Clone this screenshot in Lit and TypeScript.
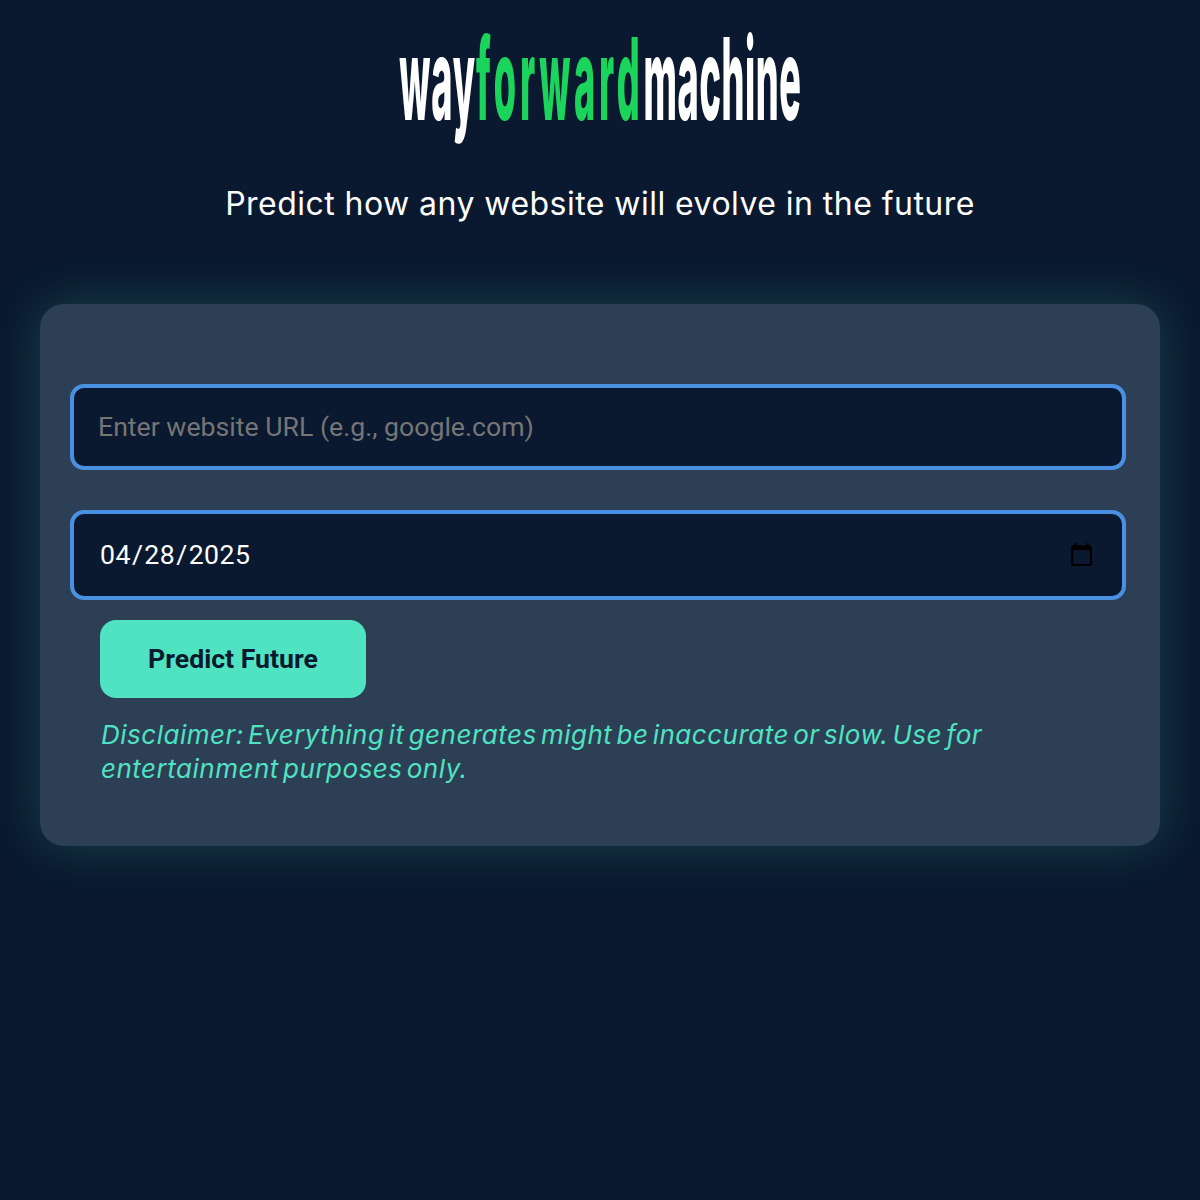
import { LitElement, html, css } from "lit";
import { customElement } from "lit/decorators.js";

@customElement("app-root")
export class AppRoot extends LitElement {
  static styles = css`
    :host { display: block; min-height: 1200px; background: #0a192f; font-family: "Roboto", sans-serif; color: #fff; }
    .page { display: flex; flex-direction: column; padding: 0 40px; }
    .logo-wrap { height: 148px; display: flex; justify-content: center; align-items: flex-start; overflow: visible; }
    .logo { flex: none; display: inline-block; font: 800 114px/157px "Inter", sans-serif; transform: scaleX(0.316); transform-origin: center top; white-space: nowrap; }
    .way { letter-spacing: 3px; }
    .forward { color: #1bd45c; letter-spacing: 12px; }
    .machine { letter-spacing: 2px; }
    .tagline { margin: 0; height: 156px; padding-top: 37px; box-sizing: border-box; text-align: center; font: 400 32px/38px "Inter", sans-serif; letter-spacing: 0.46px; }
    .card { background: #2c3f55; border-radius: 24px; box-shadow: 0 0 50px rgba(80, 227, 194, 0.2); padding: 80px 34px 0 30px; display: flex; flex-direction: column; height: 542px; box-sizing: border-box; }
    .card > * { flex: none; }
    input { box-sizing: border-box; width: 100%; background: #0a192f; border: 4px solid #4a90e2; border-radius: 14px; color: #fff; font: 400 26.67px "Roboto", sans-serif; padding: 0 24px; outline: none; }
    .url { height: 86px; margin-bottom: 40px; }
    .date { height: 90px; margin-bottom: 20px; letter-spacing: 0.45px; padding: 0 25px; }
    button { align-self: flex-start; margin-left: 30px; width: 266px; height: 78px; border: none; border-radius: 16px; background: #50e3c2; color: #0a192f; font: 700 26.67px "Roboto", sans-serif; }
    .note { margin: 20px 0 0 31px; padding-right: 100px; color: #50e3c2; font: italic 400 26px/34px "Inter", sans-serif; letter-spacing: 0.5px; word-spacing: -3.6px; }
  `;

  render() {
    return html`
      <div class="page">
        <div class="logo-wrap"><div class="logo"><span class="way">way</span><span class="forward">forward</span><span class="machine">machine</span></div></div>
        <p class="tagline">Predict how any website will evolve in the future</p>
        <div class="card">
          <input class="url" type="text" placeholder="Enter website URL (e.g., google.com)" />
          <input class="date" type="date" value="2025-04-28" />
          <button>Predict Future</button>
          <p class="note">Disclaimer: Everything it generates might be inaccurate or slow. Use for entertainment purposes only.</p>
        </div>
      </div>
    `;
  }
}
